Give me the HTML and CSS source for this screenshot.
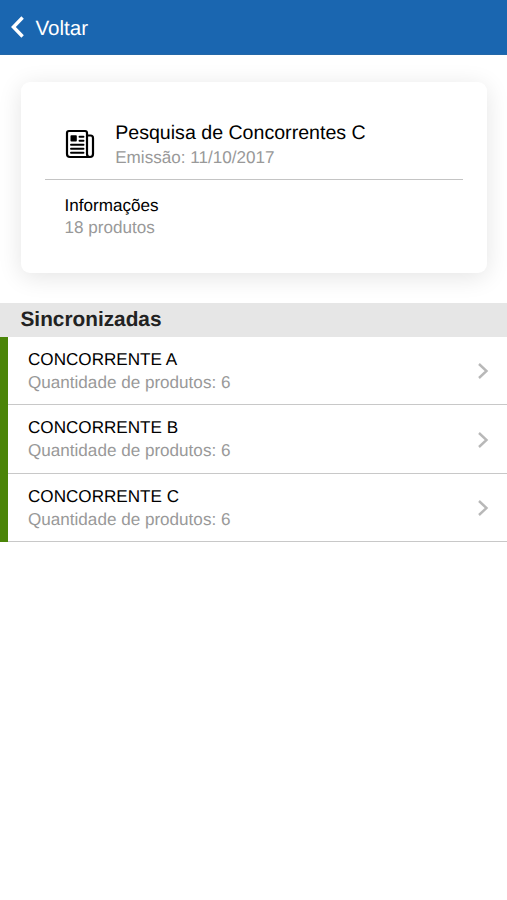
FILE: index.html
```html
<!DOCTYPE html>
<html lang="pt-BR">
<head>
    <meta charset="UTF-8">
    <meta name="viewport" content="width=device-width, initial-scale=1.0">
    <title>Pesquisa de Concorrentes</title>
    <link rel="stylesheet" href="styles.css">
</head>
<body>
    <header class="toolbar">
        <svg class="back-icon" viewBox="0 0 14 24">
            <path d="M12.6 2.5 L3.4 12 L12.6 21.5"/>
        </svg>
        <span class="back-text">Voltar</span>
    </header>

    <section class="card">
        <div class="card-header">
            <svg class="news-icon" viewBox="0 0 30 30">
                <path d="M22 6.5 H25.5 Q28 6.5 28 9 V25 Q28 28 25 28 Q22 28 22 25 V4 Q22 2 20 2 H4 Q2 2 2 4 V25 Q2 28 5 28 H25"/>
                <path class="lines" d="M14.5 7.7 H18.5 M14.5 11.7 H18.5 M6 15.8 H18.5 M6 19.8 H18.5 M6 23.8 H18.5"/>
                <rect x="5.5" y="6.3" width="6.3" height="6.3" rx="0.8"/>
            </svg>
            <div>
                <h1>Pesquisa de Concorrentes C</h1>
                <p>Emissão: 11/10/2017</p>
            </div>
        </div>
        <div class="card-info">
            <h2>Informações</h2>
            <p>18 produtos</p>
        </div>
    </section>

    <div class="divider">Sincronizadas</div>
    <ul class="list">
        <li class="item">
            <div>
                <h2>CONCORRENTE A</h2>
                <p>Quantidade de produtos: 6</p>
            </div>
            <svg class="arrow" viewBox="0 0 12 18"><path d="M2 2 L9.5 9 L2 16"/></svg>
        </li>
        <li class="item">
            <div>
                <h2>CONCORRENTE B</h2>
                <p>Quantidade de produtos: 6</p>
            </div>
            <svg class="arrow" viewBox="0 0 12 18"><path d="M2 2 L9.5 9 L2 16"/></svg>
        </li>
        <li class="item">
            <div>
                <h2>CONCORRENTE C</h2>
                <p>Quantidade de produtos: 6</p>
            </div>
            <svg class="arrow" viewBox="0 0 12 18"><path d="M2 2 L9.5 9 L2 16"/></svg>
        </li>
    </ul>
</body>
</html>
```
FILE: styles.css
```css
* {
    box-sizing: border-box;
}

body {
    margin: 0;
    background: #fff;
    color: #000;
    font-family: "Liberation Sans", Arial, sans-serif;
    font-size: 17.1px;
    text-rendering: geometricPrecision;
}

h1, h2, p, ul {
    margin: 0;
    padding: 0;
    font-weight: normal;
}

h1 {
    font-size: 19.6px;
    line-height: 26px;
}

h2 {
    font-size: 17.1px;
    line-height: 22px;
}

p {
    color: #999;
    line-height: 22px;
}

svg {
    fill: none;
    flex: none;
}

/* Toolbar */
.toolbar {
    display: flex;
    align-items: center;
    height: 55px;
    padding-left: 10px;
    border-bottom: 1px solid #2468a8;
    background: #1a66b0;
    color: #fff;
}

.back-icon {
    width: 14px;
    height: 24px;
    stroke: #fff;
    stroke-width: 3.4;
}

.back-text {
    margin-left: 11.4px;
    padding-top: 3px;
    font-size: 20.6px;
}

/* Card */
.card {
    height: 191px;
    margin: 27px 20px 30px 21px;
    padding: 38px 24px 0;
    border-radius: 9px;
    background: #fff;
    box-shadow: 0 4px 24px rgba(0, 0, 0, 0.11);
}

.card-header {
    display: flex;
    height: 60px;
    padding-left: 20px;
    border-bottom: 1px solid #c4c4c4;
}

.card-header p {
    line-height: 24px;
}

.news-icon {
    width: 30px;
    height: 30px;
    margin: 9px 20.2px 0 0;
    stroke: #000;
    stroke-width: 2.2;
}

.news-icon .lines {
    stroke-width: 1.9;
    stroke-linecap: round;
}

.news-icon rect {
    fill: #000;
    stroke: none;
}

.card-info {
    padding: 15px 0 0 19.5px;
}

/* List */
.divider {
    height: 34px;
    padding-left: 20.5px;
    background: #e6e6e6;
    color: #222;
    font-size: 20.8px;
    font-weight: bold;
    line-height: 33px;
}

.list {
    list-style: none;
    border-left: 8px solid #4b8508;
}

.item {
    display: flex;
    justify-content: space-between;
    height: 68.4px;
    padding: 12px 18.5px 0 20px;
    border-bottom: 1px solid #c8c8c8;
}

.item p {
    line-height: 24px;
}

.arrow {
    width: 12px;
    height: 18px;
    margin-top: 13.4px;
    stroke: #b8b8b8;
    stroke-width: 2.4;
}
```
